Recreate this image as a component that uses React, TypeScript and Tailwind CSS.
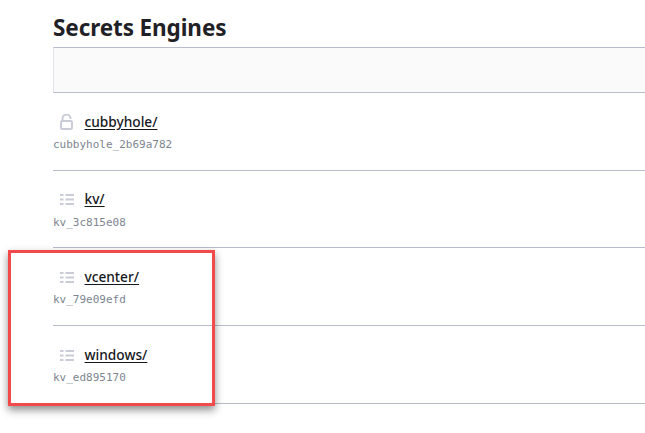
import React from "react";

const rows = [
  { name: "cubbyhole/", id: "cubbyhole_2b69a782", icon: "lock" },
  { name: "kv/", id: "kv_3c815e08", icon: "list" },
  { name: "vcenter/", id: "kv_79e09efd", icon: "list" },
  { name: "windows/", id: "kv_ed895170", icon: "list" },
];

function LockIcon() {
  return (
    <svg width="13" height="16" viewBox="0 0 13 16" fill="none" stroke="#c9ccd6" strokeWidth="2">
      <path d="M2.5 7V4.5a4 4 0 0 1 8 0V5" />
      <rect x="1" y="7" width="11" height="8" rx="1.5" />
    </svg>
  );
}

function ListIcon() {
  return (
    <svg width="14" height="11" viewBox="0 0 14 11" fill="none" stroke="#c9ccd6" strokeWidth="2">
      <path d="M0 1h3.5M5.5 1h8.5M0 5.5h3.5M5.5 5.5h8.5M0 10h3.5M5.5 10h8.5" />
    </svg>
  );
}

export default function App() {
  return (
    <div className="w-[645px] h-[433px] overflow-hidden bg-white relative font-['Noto_Sans',sans-serif]">
      <div className="pl-[53px]">
        <h1 className="text-[22.5px] leading-[30px] font-bold text-[#1f2126] pt-[13px] tracking-[-0.1px]">
          Secrets Engines
        </h1>
        <div className="h-[46px] mt-[4px] bg-[#fafafb] border-y border-l border-[#b8bccb] border-l-[#e4e5ea]"></div>
        {rows.map((row) => (
          <div key={row.name} className="h-[77.7px] border-b border-[#b8bccb] pt-[19px]">
            <div className="flex items-center h-[20px]">
              <div className="w-[31.5px] shrink-0 flex pl-[7px]">
                {row.icon === "lock" ? <LockIcon /> : <ListIcon />}
              </div>
              <a className="text-[13.7px] font-medium text-[#16181d] underline underline-offset-2">{row.name}</a>
            </div>
            <div className="text-[11px] leading-[16px] mt-[5px] text-[#7d8590] font-['DejaVu_Sans_Mono',monospace]">
              {row.id}
            </div>
          </div>
        ))}
      </div>
      <div className="absolute left-[8px] top-[250px] w-[207px] h-[156px] border-[3px] border-[#f24a4a] shadow-[0_4px_8px_rgba(0,0,0,0.45)]"></div>
    </div>
  );
}
